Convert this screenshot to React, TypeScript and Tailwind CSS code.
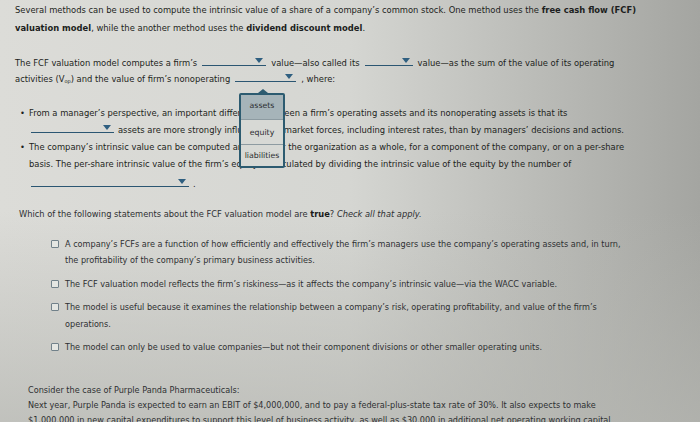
import React from 'react';

const Blank = ({ w, className = 'mx-[5px]' }: { w: number; className?: string }) => (
  <span
    className={`relative inline-block align-baseline border-b border-[#2b5672] h-[9px] ${className}`}
    style={{ width: w }}
  >
    <span className="absolute right-[3px] top-[1px] w-0 h-0 border-l-[4px] border-r-[4px] border-t-[5px] border-l-transparent border-r-transparent border-t-[#2f5f80]" />
  </span>
);

const Check = ({ lines }: { lines: string[] }) => (
  <div className="flex items-start gap-[6px] pl-[51px]">
    <span className="mt-[4px] shrink-0 w-[8px] h-[8px] border border-[#71818a] bg-[#e4e6e2] rounded-[1px]" />
    <div className="leading-[16.5px]">
      {lines.map((l) => (
        <p key={l} className="whitespace-nowrap">{l}</p>
      ))}
    </div>
  </div>
);

export default function App() {
  return (
    <div
      className="relative w-[700px] h-[422px] overflow-hidden text-[#1c1e20] bg-[#d5d6d2]"
      style={{ fontFamily: '"DejaVu Sans", Verdana, sans-serif' }}
    >
      {/* lighting of the photo */}
      <div className="pointer-events-none absolute inset-0 bg-linear-to-r from-[#dcdcd8] via-[#d5d6d2] to-[#a4a5a1]" />
      <div className="pointer-events-none absolute inset-0 bg-linear-to-b from-transparent via-transparent to-[#b5b6b1]/70" />

      <div className="relative">
        <div className="px-[15px] pt-[1px] text-[8.4px] leading-[18px] whitespace-nowrap">
          <p>
            Several methods can be used to compute the intrinsic value of a share of a company’s common stock. One method uses the{' '}
            <b>free cash flow (FCF)</b>
          </p>
          <p>
            <b>valuation model</b>, while the another method uses the <b>dividend discount model</b>.
          </p>
        </div>

        <div className="px-[15px] mt-[18px] text-[8.4px] leading-[16px] whitespace-nowrap">
          <p>
            The FCF valuation model computes a firm’s
            <Blank w={64} />
            value—also called its
            <Blank w={48} />
            value—as the sum of the value of its operating
          </p>
          <p>
            activities (V<sub className="text-[5px]">op</sub>) and the value of firm’s nonoperating
            <Blank w={61} />, where:
          </p>
        </div>

        <div className="mt-[17.5px] pl-[20px] text-[8.4px] leading-[17px] whitespace-nowrap">
          <div className="flex gap-[4px]">
            <span>•</span>
            <div>
              <p>From a manager’s perspective, an important difference between a firm’s operating assets and its nonoperating assets is that its</p>
              <p>
                <Blank w={83} className="ml-[2px] mr-[4px]" />
                assets are more strongly influenced by market forces, including interest rates, than by managers’ decisions and actions.
              </p>
            </div>
          </div>
          <div className="flex gap-[4px]">
            <span>•</span>
            <div>
              <p>The company’s intrinsic value can be computed and used for the organization as a whole, for a component of the company, or on a per-share</p>
              <p>basis. The per-share intrinsic value of the firm’s equity is calculated by dividing the intrinsic value of the equity by the number of</p>
              <p className="leading-[20px] pt-[1px]">
                <Blank w={158} className="ml-[2px] mr-[4px]" />.
              </p>
            </div>
          </div>
        </div>

        <p className="px-[19px] mt-[12px] text-[8.3px] leading-[16px] text-[#2e3032] whitespace-nowrap">
          Which of the following statements about the FCF valuation model are <b className="text-[#1a1a1a]">true</b>? <i>Check all that apply.</i>
        </p>

        <div className="mt-[14px] flex flex-col gap-[7px] text-[8.15px] text-[#2e3032]">
          <Check
            lines={[
              'A company’s FCFs are a function of how efficiently and effectively the firm’s managers use the company’s operating assets and, in turn,',
              'the profitability of the company’s primary business activities.',
            ]}
          />
          <Check lines={['The FCF valuation model reflects the firm’s riskiness—as it affects the company’s intrinsic value—via the WACC variable.']} />
          <Check
            lines={[
              'The model is useful because it examines the relationship between a company’s risk, operating profitability, and value of the firm’s',
              'operations.',
            ]}
          />
          <Check lines={['The model can only be used to value companies—but not their component divisions or other smaller operating units.']} />
        </div>

        <div className="px-[28px] mt-[26px] text-[8.15px] leading-[16px] text-[#2e3032] whitespace-nowrap">
          <p>Consider the case of Purple Panda Pharmaceuticals:</p>
          <div className="leading-[15px]">
            <p>Next year, Purple Panda is expected to earn an EBIT of $4,000,000, and to pay a federal-plus-state tax rate of 30%. It also expects to make</p>
            <p>$1,000,000 in new capital expenditures to support this level of business activity, as well as $30,000 in additional net operating working capital</p>
          </div>
        </div>
      </div>

      {/* open dropdown menu */}
      <div className="absolute left-[239px] top-[93px] w-[46px] border-2 border-[#2c5b70] rounded-[2px] bg-[#d7d9d5] text-[7.8px] text-[#2a2c2e] text-center">
        <span className="absolute -top-[6px] left-[17px] w-0 h-0 border-l-[5px] border-r-[5px] border-b-[4px] border-l-transparent border-r-transparent border-b-[#2c5b70]" />
        <div className="h-[25px] leading-[22px] bg-[#a6b4b9] border-b border-[#8d9ba1]">assets</div>
        <div className="h-[25px] leading-[25px] border-b border-[#8d9ba1]">equity</div>
        <div className="h-[21px] leading-[22px]">liabilities</div>
      </div>
    </div>
  );
}
